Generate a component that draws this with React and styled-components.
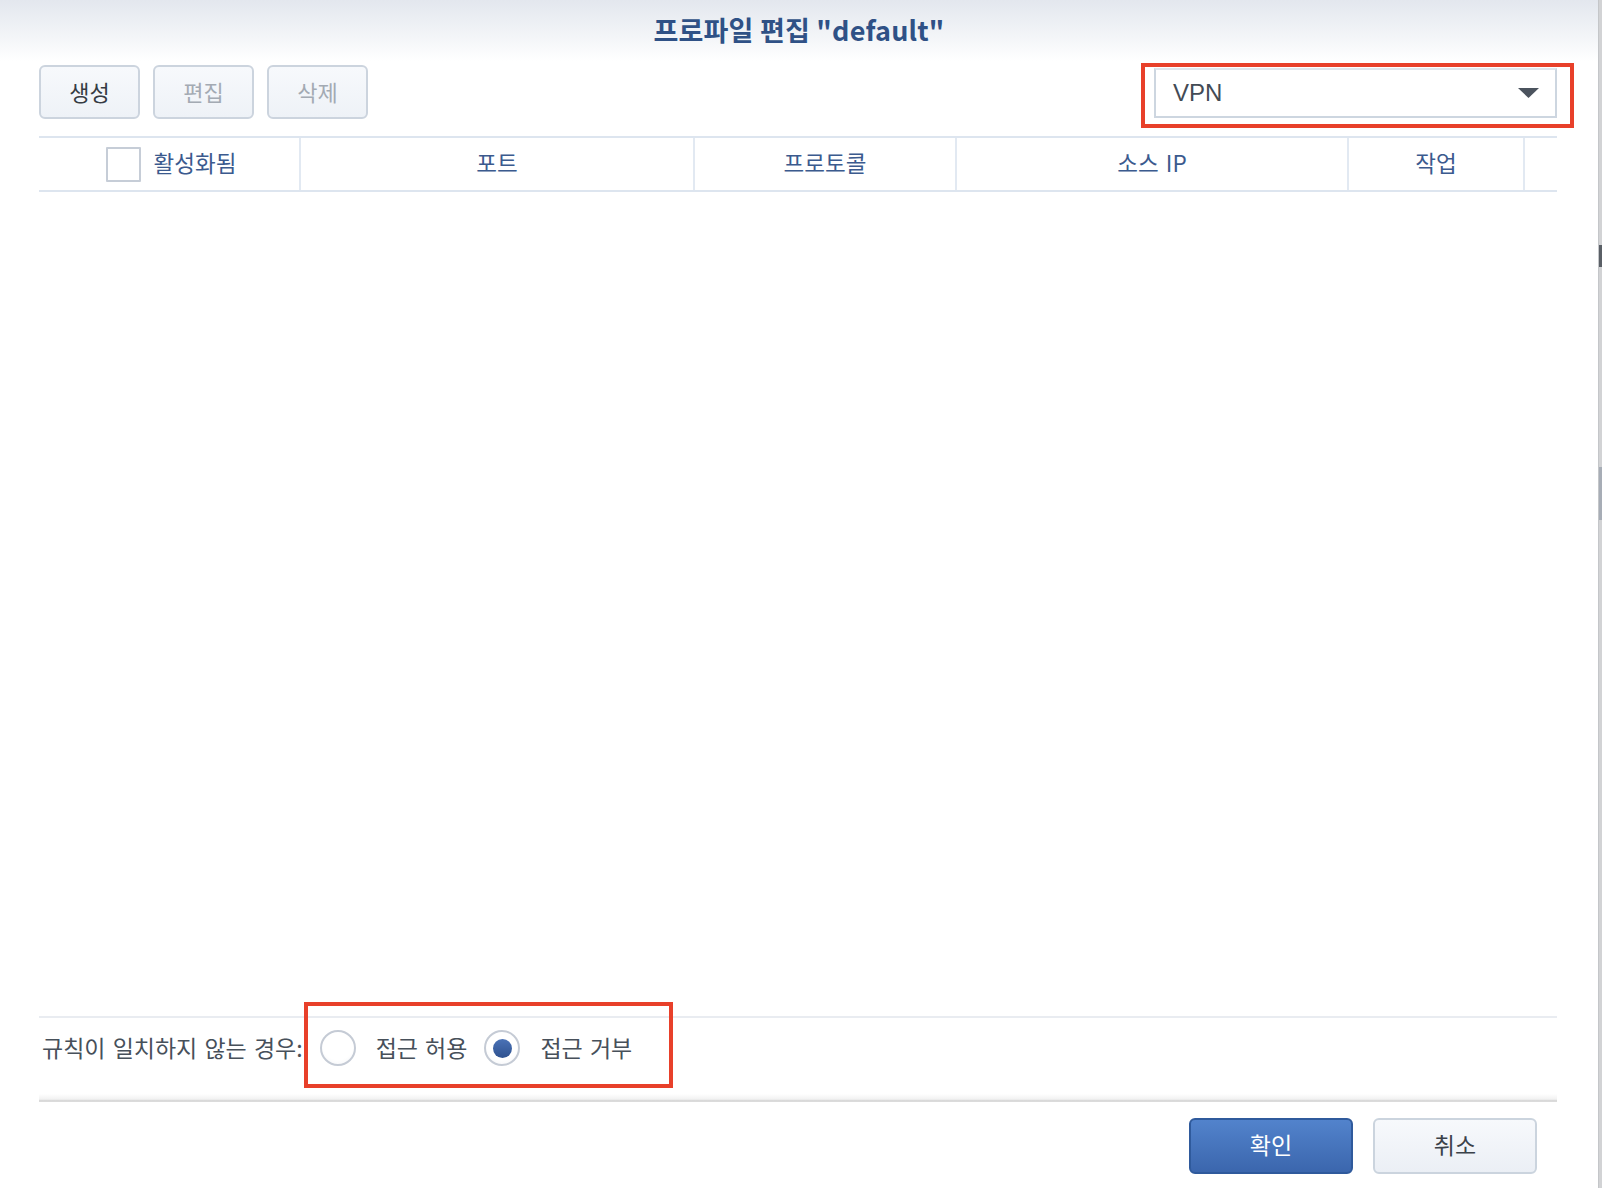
import React from "react";
import styled, { createGlobalStyle } from "styled-components";

const Global = createGlobalStyle`
  html, body { margin: 0; padding: 0; background: #ffffff; }
  body {
    font-family: "Noto Sans CJK KR", "Noto Sans", "Liberation Sans", sans-serif;
    -webkit-font-smoothing: antialiased;
  }
  * { box-sizing: border-box; }
`;

const Page = styled.div`
  width: 1602px;
  height: 1188px;
  display: flex;
  flex-direction: row;
  overflow: hidden;
`;

const Dialog = styled.div`
  flex: 1;
  display: flex;
  flex-direction: column;
  background: #ffffff;
  position: relative;
`;

const EdgeStrip = styled.div`
  width: 4px;
  display: flex;
  flex-direction: column;
  background: #d2d3d5;
  border-left: 1px solid #c4c6c9;
`;

const EdgeGap = styled.div`
  height: ${(p) => p.h}px;
`;

const EdgeMark = styled.div`
  height: ${(p) => p.h}px;
  background: ${(p) => p.c};
`;

const TitleBar = styled.div`
  height: 61px;
  display: flex;
  align-items: center;
  justify-content: center;
  padding-bottom: 2px;
  background: linear-gradient(to bottom, #e3e7ee 0%, #f3f5f8 60%, #ffffff 100%);
`;

const Title = styled.h1`
  margin: 0;
  font-size: 27px;
  line-height: 30px;
  font-weight: 700;
  color: #2f5186;
  letter-spacing: 0.2px;
`;

const Toolbar = styled.div`
  display: flex;
  align-items: flex-start;
  padding: 4px 41px 0 39px;
  height: 75px;
`;

const ToolButton = styled.button`
  width: 101px;
  height: 54px;
  margin-right: 13px;
  border: 2px solid #ccd4de;
  border-radius: 6px;
  background: linear-gradient(to bottom, #f7f9fc, #eef2f7);
  font-family: inherit;
  font-size: 22px;
  line-height: 1;
  padding: 0 0 3px 0;
  color: ${(p) => (p.disabled ? "#a3aab3" : "#353b43")};
`;

const Spacer = styled.div`
  flex: 1;
`;

const SelectWrap = styled.div`
  position: relative;
  margin-top: 3px;
`;

const Select = styled.div`
  width: 403px;
  height: 50px;
  border: 2px solid #cdd6e0;
  border-top-color: #dfe5ec;
  display: flex;
  align-items: center;
  justify-content: space-between;
  padding: 0 16px 0 17px;
  background: #ffffff;
`;

const SelectText = styled.span`
  font-family: "Liberation Sans", "Noto Sans", sans-serif;
  font-size: 24px;
  color: #434b55;
`;

const Highlight = styled.div`
  position: absolute;
  pointer-events: none;
  border: 4.5px solid #e8402a;
  left: ${(p) => p.l}px;
  top: ${(p) => p.t}px;
  right: ${(p) => p.r}px;
  bottom: ${(p) => p.b}px;
`;

const Table = styled.div`
  margin: 0 41px 0 39px;
  display: flex;
  flex-direction: column;
  flex: 1;
`;

const HeaderRow = styled.div`
  display: grid;
  grid-template-columns: 262px 394px 262px 392px 176px 1fr;
  height: 56px;
  border-top: 2px solid #dde5ef;
  border-bottom: 2px solid #dde5ef;
`;

const HeaderCell = styled.div`
  display: flex;
  align-items: center;
  justify-content: center;
  gap: 13px;
  border-right: ${(p) => (p.last ? "none" : "2px solid #e2e9f2")};
  font-size: 22.5px;
  line-height: 1;
  word-spacing: 2px;
  color: #3b5a8e;
  padding: 0 0 3px ${(p) => (p.first ? "4px" : "0")};
`;

const Checkbox = styled.span`
  width: 35px;
  height: 35px;
  border: 2px solid #c6cdd7;
  background: #ffffff;
  border-radius: 1px;
  margin-top: 3px;
`;

const TableBody = styled.div`
  flex: 1;
`;

const OptionRow = styled.div`
  position: relative;
  margin: 0 41px 0 39px;
  border-top: 2px solid #e9ecf1;
  height: 78px;
  display: flex;
  align-items: flex-start;
  padding: 12px 0 0 3px;
  font-size: 23px;
  word-spacing: 2px;
  color: #47505a;
`;

const OptionLabel = styled.span`
  line-height: 35px;
  margin-right: 17px;
`;

const Radio = styled.span`
  width: 36px;
  height: 36px;
  border-radius: 50%;
  border: 2px solid #c5cbd5;
  background: radial-gradient(circle at 50% 40%, #ffffff 60%, #f1f3f6 100%);
  display: flex;
  align-items: center;
  justify-content: center;
  margin-right: 20px;
  flex-shrink: 0;
`;

const RadioDot = styled.span`
  width: 19px;
  height: 19px;
  border-radius: 50%;
  background: linear-gradient(to bottom, #4a72b6, #2f5290);
`;

const RadioText = styled.span`
  line-height: 35px;
  margin-right: 17px;
`;

const FooterDivider = styled.div`
  margin: 0 41px 0 39px;
  height: 8px;
  background: linear-gradient(to bottom, #ffffff 0%, #f4f4f4 55%, #ebebeb 70%, #d9d9d9 80%, #dcdcdc 100%);
`;

const Footer = styled.div`
  display: flex;
  justify-content: flex-end;
  gap: 20px;
  padding: 16px 61px 0 0;
  height: 86px;
`;

const FooterButton = styled.button`
  width: 164px;
  height: 56px;
  border-radius: 6px;
  font-family: inherit;
  font-size: 23px;
  line-height: 1;
  padding: 0 0 3px 0;
  border: 2px solid ${(p) => (p.primary ? "#2f5a9c" : "#cbd4de")};
  background: ${(p) =>
    p.primary
      ? "linear-gradient(to bottom, #5283cc, #3b66ad)"
      : "linear-gradient(to bottom, #f7f9fc, #ebeff5)"};
  color: ${(p) => (p.primary ? "#ffffff" : "#3b424a")};
`;

function Arrow() {
  return (
    <svg width="21" height="10" viewBox="0 0 21 10">
      <polygon points="0,0 21,0 10.5,10" fill="#4b535e" />
    </svg>
  );
}

export default function App() {
  return (
    <>
      <Global />
      <Page>
        <Dialog>
          <TitleBar>
            <Title>프로파일 편집 "default"</Title>
          </TitleBar>
          <Toolbar>
            <ToolButton>생성</ToolButton>
            <ToolButton disabled>편집</ToolButton>
            <ToolButton disabled>삭제</ToolButton>
            <Spacer />
            <SelectWrap>
              <Select>
                <SelectText>VPN</SelectText>
                <Arrow />
              </Select>
              <Highlight l={-13} t={-5} r={-17} b={-10} />
            </SelectWrap>
          </Toolbar>
          <Table>
            <HeaderRow>
              <HeaderCell first>
                <Checkbox />
                활성화됨
              </HeaderCell>
              <HeaderCell>포트</HeaderCell>
              <HeaderCell>프로토콜</HeaderCell>
              <HeaderCell>소스 IP</HeaderCell>
              <HeaderCell>작업</HeaderCell>
              <HeaderCell last />
            </HeaderRow>
            <TableBody />
          </Table>
          <OptionRow>
            <OptionLabel>규칙이 일치하지 않는 경우:</OptionLabel>
            <Radio />
            <RadioText>접근 허용</RadioText>
            <Radio>
              <RadioDot />
            </Radio>
            <RadioText>접근 거부</RadioText>
            <Highlight l={265} t={-16} r={884} b={6} />
          </OptionRow>
          <FooterDivider />
          <Footer>
            <FooterButton primary>확인</FooterButton>
            <FooterButton>취소</FooterButton>
          </Footer>
        </Dialog>
        <EdgeStrip>
          <EdgeGap h={245} />
          <EdgeMark h={22} c="#5a5f66" />
          <EdgeGap h={200} />
          <EdgeMark h={53} c="#a7adb6" />
        </EdgeStrip>
      </Page>
    </>
  );
}
